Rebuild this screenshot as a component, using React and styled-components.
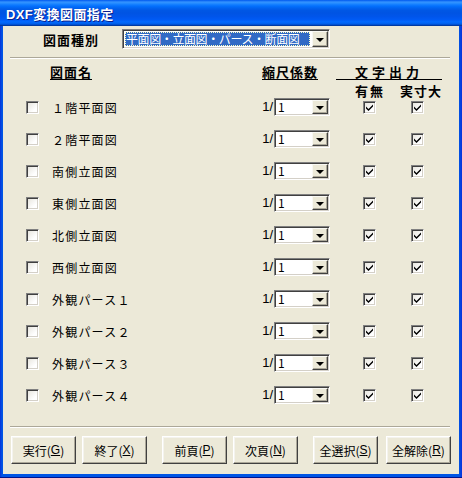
import React from "react";
import styled, { createGlobalStyle } from "styled-components";

const Global = createGlobalStyle`
  html, body { margin: 0; padding: 0; background: #ffffff; }
  body { font-family: "Noto Sans CJK JP", "Liberation Sans", sans-serif; }
  * { box-sizing: border-box; }
`;

const JP = `"Noto Sans CJK JP", "Liberation Sans", sans-serif`;

const Frame = styled.div`
  width: 462px;
  height: 478px;
  display: flex;
  flex-direction: column;
  background: linear-gradient(to right, #0831d9 0px, #0055e5 2px, #0055e5 459px, #0831d9 462px);
  box-shadow: inset 0 -1px 0 #00138c;
`;

const TitleBar = styled.div`
  height: 26px;
  flex: none;
  display: flex;
  align-items: center;
  padding-left: 6px;
  background: linear-gradient(
    to bottom,
    #0058ee 0%,
    #3593ff 8%,
    #288eff 12%,
    #127dff 18%,
    #036ffc 24%,
    #0262ee 32%,
    #0057e5 40%,
    #0054e3 50%,
    #0055eb 64%,
    #005bf5 76%,
    #026afe 84%,
    #0062ef 90%,
    #0052d6 94%,
    #0040ab 97%,
    #003092 100%
  );
`;

const Title = styled.span`
  color: #ffffff;
  font-family: "Liberation Sans", "Noto Sans CJK JP", sans-serif;
  font-weight: bold;
  font-size: 13px;
  letter-spacing: 0.4px;
  text-shadow: 1px 1px 0 #0a1e8c;
`;

const Client = styled.div`
  flex: 1;
  margin: 0 3px 4px 3px;
  background: #ece9d8;
  display: flex;
  flex-direction: column;
  font-family: ${JP};
  font-size: 12px;
  color: #000;
`;

const TypeRow = styled.div`
  display: flex;
  align-items: center;
  height: 20px;
  margin-top: 3px;
  padding-left: 40px;
`;

const BoldLabel = styled.span`
  font-weight: bold;
  font-size: 13px;
  letter-spacing: 1px;
  width: 79px;
  flex: none;
`;

const Sunken = styled.div`
  display: flex;
  align-items: stretch;
  background: #ffffff;
  border: 1px solid;
  border-color: #808080 #ffffff #ffffff #808080;
  box-shadow: inset 1px 1px 0 #404040, inset -1px -1px 0 #d4d0c8;
  padding: 1px 1px 1px 2px;
  width: ${(p) => p.$w}px;
  height: ${(p) => p.$h}px;
  flex: none;
`;

const ComboText = styled.div`
  flex: 1;
  min-width: 0;
  display: flex;
  align-items: center;
  padding-left: 1px;
  font-size: 12px;
  line-height: 12px;
  white-space: nowrap;
  ${(p) =>
    p.$selected &&
    `
    background: #316ac5;
    color: #ffffff;
    outline: 1px dotted #ffffc0;
    outline-offset: -1px;
    margin: 1px 2px 1px 0;
    letter-spacing: -0.4px;
  `}
`;

const DropBtn = styled.div`
  width: 16px;
  flex: none;
  display: flex;
  align-items: center;
  justify-content: center;
  background: #ece9d8;
  border: 1px solid;
  border-color: #f8f8f4 #404040 #404040 #f8f8f4;
  box-shadow: inset -1px -1px 0 #aca899;
`;

const Arrow = styled.span`
  width: 0;
  height: 0;
  border-left: 4px solid transparent;
  border-right: 4px solid transparent;
  border-top: 4px solid #000;
  margin-top: 1px;
`;

const Separator = styled.div`
  height: 2px;
  flex: none;
  margin: ${(p) => p.$top}px 9px 0 7px;
  border-top: 1px solid #aca899;
  border-bottom: 1px solid #ffffff;
`;

const Header = styled.div`
  display: flex;
  flex-direction: column;
  margin-top: 5px;
  height: 34px;
  gap: 4px;
`;

const HeaderLine = styled.div`
  display: flex;
  align-items: flex-end;
  height: ${(p) => p.$h}px;
`;

const HeadText = styled.span`
  font-weight: bold;
  font-size: 13px;
  letter-spacing: ${(p) => p.$ls || 1}px;
  line-height: 15px;
  border-bottom: ${(p) => (p.$u ? "1px solid #000" : "none")};
  margin-left: ${(p) => p.$ml || 0}px;
  width: ${(p) => (p.$w ? `${p.$w}px` : "auto")};
  text-align: ${(p) => (p.$w ? "center" : "left")};
  flex: none;
`;

const Rows = styled.div`
  display: flex;
  flex-direction: column;
  gap: 14px;
  margin-top: 0px;
`;

const Row = styled.div`
  display: flex;
  align-items: center;
  height: 18px;
  padding-left: 23px;
`;

const Box = styled.div`
  width: 13px;
  height: 13px;
  flex: none;
  margin-left: ${(p) => p.$ml || 0}px;
  border: 1px solid;
  border-color: #808080 #ffffff #ffffff #808080;
  box-shadow: inset 1px 1px 0 #404040, inset -1px -1px 0 #d4d0c8;
  background: linear-gradient(135deg, #e4e2da 0%, #ffffff 70%);
  display: flex;
  align-items: center;
  justify-content: center;
`;

const Name = styled.span`
  width: 205px;
  margin-left: 13px;
  flex: none;
  letter-spacing: 1.2px;
  font-size: 12px;
`;

const Scale = styled.span`
  width: 17px;
  flex: none;
  font-size: 13px;
  line-height: 14px;
  font-family: "Liberation Sans", sans-serif;
  text-align: right;
  padding-right: 1px;
  margin-top: -1px;
`;

const Buttons = styled.div`
  display: flex;
  margin-top: 8px;
  padding-left: 8px;
`;

const Button = styled.div`
  width: 65px;
  height: 28px;
  flex: none;
  margin-left: ${(p) => p.$ml || 0}px;
  display: flex;
  align-items: center;
  justify-content: center;
  background: #ece9d8;
  border: 1px solid;
  border-color: #ffffff #404040 #404040 #ffffff;
  box-shadow: inset -1px -1px 0 #aca899, inset 1px 1px 0 #f4f3ee;
  font-size: 12px;
  white-space: nowrap;
`;

const U = styled.span`
  text-decoration: underline;
  font-family: "Liberation Sans", sans-serif;
`;

const Check = () => (
  <svg width="9" height="9" viewBox="0 0 9 9">
    <path d="M1 3.5 L3.5 6 L8 1.5 L8 3.5 L3.5 8 L1 5.5 Z" fill="#000" />
  </svg>
);

const Combo = ({ w, h, text, selected }) => (
  <Sunken $w={w} $h={h}>
    <ComboText $selected={selected}>{text}</ComboText>
    <DropBtn>
      <Arrow />
    </DropBtn>
  </Sunken>
);

const names = [
  "１階平面図",
  "２階平面図",
  "南側立面図",
  "東側立面図",
  "北側立面図",
  "西側立面図",
  "外観パース１",
  "外観パース２",
  "外観パース３",
  "外観パース４",
];

const buttons = [
  { label: "実行", key: "G", ml: 0 },
  { label: "終了", key: "X", ml: 6 },
  { label: "前頁", key: "P", ml: 15 },
  { label: "次頁", key: "N", ml: 6 },
  { label: "全選択", key: "S", ml: 15 },
  { label: "全解除", key: "R", ml: 8 },
];

export default function App() {
  return (
    <>
      <Global />
      <Frame>
        <TitleBar>
          <Title>DXF変換図面指定</Title>
        </TitleBar>
        <Client>
          <TypeRow>
            <BoldLabel>図面種別</BoldLabel>
            <Combo w={208} h={20} text="平面図・立面図・パース・断面図" selected />
          </TypeRow>
          <Separator $top={8} />
          <Header>
            <HeaderLine $h={16}>
              <HeadText $u $ml={47}>図面名</HeadText>
              <HeadText $u $ml={170}>縮尺係数</HeadText>
              <HeadText $u $ml={18} $w={106} $ls={4}>文字出力</HeadText>
            </HeaderLine>
            <HeaderLine $h={14}>
              <HeadText $ml={352} $ls={2}>有無</HeadText>
              <HeadText $ml={15} $ls={1}>実寸大</HeadText>
            </HeaderLine>
          </Header>
          <Rows>
            {names.map((n) => (
              <Row key={n}>
                <Box />
                <Name>{n}</Name>
                <Scale>1/</Scale>
                <Combo w={56} h={18} text="1" />
                <Box $ml={33}>
                  <Check />
                </Box>
                <Box $ml={35}>
                  <Check />
                </Box>
              </Row>
            ))}
          </Rows>
          <Separator $top={22} />
          <Buttons>
            {buttons.map((b) => (
              <Button key={b.key} $ml={b.ml}>
                {b.label}(<U>{b.key}</U>)
              </Button>
            ))}
          </Buttons>
        </Client>
      </Frame>
    </>
  );
}
